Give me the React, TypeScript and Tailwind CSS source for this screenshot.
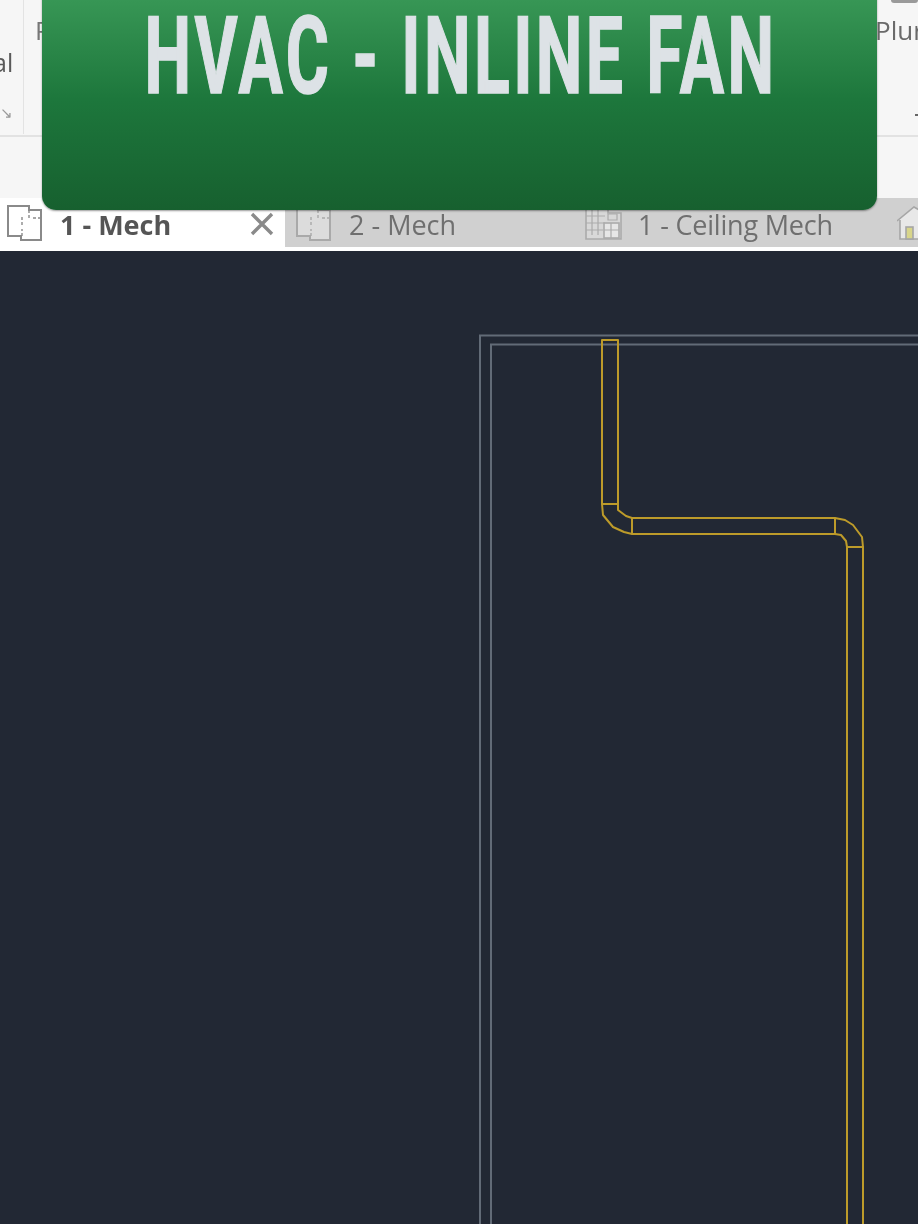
const PlanIcon = ({ muted = false }: { muted?: boolean }) => (
  <svg width="36" height="36" viewBox="0 0 36 36" fill="none" stroke={muted ? "#a9a9a9" : "#8a8a8a"} strokeWidth="2">
    <path d="M1 1H22V5H34V35H14V31H1Z" fill={muted ? "#dcdcdc" : "#ffffff"} />
    <path d="M15 31V24M15 20V12M22 5V13M26 13H34" strokeWidth="1.4" strokeDasharray="3 2" />
  </svg>
);

const CeilingIcon = () => (
  <svg width="38" height="34" viewBox="0 0 38 34" fill="none" stroke="#ababab" strokeWidth="1.6">
    <path d="M1 1H23V7H36V33H1Z" fill="#d8d8d8" />
    <path d="M7 3V29M13 3V29M1 10H20M1 17H20M1 24H18" strokeWidth="1.2" />
    <rect x="19" y="17" width="15" height="15" fill="#e6e6e6" />
    <path d="M26 17V32M19 24H34M23 8H32V14H23Z" strokeWidth="1.2" />
  </svg>
);

const HomeIcon = () => (
  <svg width="24" height="34" viewBox="0 0 24 34" fill="none" stroke="#a6a6a6" strokeWidth="1.6">
    <path d="M0 15L17 1L24 5V33H3V14" fill="#e8e8e8" />
    <rect x="9" y="21" width="7" height="12" fill="#d8d58a" />
  </svg>
);

const Tab = ({ label, icon, gap, textClass = "" }: { label: string; icon: React.ReactNode; gap: string; textClass?: string }) => (
  <div className={`flex items-center ${gap}`}>
    {icon}
    <span className={`pt-[3px] text-[27px] leading-none text-[#6f6f6f] whitespace-nowrap ${textClass}`}>{label}</span>
  </div>
);

const App = () => {
  return (
    <div className="relative flex flex-col w-[918px] h-[1224px] overflow-hidden bg-[#f5f5f5] blur-[0.5px] font-['Open_Sans','Noto_Sans',sans-serif]">
      {/* ribbon */}
      <div className="flex flex-col h-[198px] shrink-0 bg-[#f6f6f6]">
        <div className="relative h-[137px] border-b-2 border-[#e2e2e2] shrink-0">
          <div className="absolute left-[23px] top-0 h-[134px] w-px bg-[#e3e3e3]" />
          <span className="absolute left-[-7px] top-[50px] text-[25px] leading-none text-[#5a5a5a]">al</span>
          <span className="absolute left-[35px] top-[17px] text-[26px] leading-none text-[#777777]">P</span>
          <span className="absolute left-0 top-[105px] text-[15px] leading-none text-[#999999]">↘</span>
          <span className="absolute left-[875px] top-[17px] text-[26px] leading-none text-[#6a6a6a]">Plur</span>
          <div className="absolute left-[891px] top-0 h-[3px] w-[27px] rounded-b bg-[#9a9a9a]" />
          <div className="absolute left-[915px] top-[114px] h-[2px] w-[3px] bg-[#666666]" />
        </div>
      </div>

      {/* view tabs */}
      <div className="flex h-[49px] shrink-0 bg-[#d0d0d0]">
        <div className="flex items-center w-[285px] pl-[7px] pr-[11px] bg-white shrink-0">
          <PlanIcon />
          <span className="ml-[17px] pt-[3px] text-[27px] leading-none font-bold text-[#555555] whitespace-nowrap">1 - Mech</span>
          <svg className="ml-auto mt-[2px]" width="24" height="24" viewBox="0 0 24 24" stroke="#8a8a8a" strokeWidth="3.4">
            <path d="M2 2L22 22M22 2L2 22" />
          </svg>
        </div>
        <div className="flex items-center pl-[11px]">
          <Tab label="2 - Mech" icon={<PlanIcon muted />} gap="gap-[17px]" />
        </div>
        <div className="flex items-center pl-[129px]">
          <Tab label="1 - Ceiling Mech" icon={<CeilingIcon />} gap="gap-[15px]" textClass="tracking-[-0.2px]" />
        </div>
        <div className="flex items-center pl-[64px]">
          <HomeIcon />
        </div>
      </div>
      <div className="h-1 shrink-0 bg-white" />

      {/* drawing area */}
      <div className="flex-1 bg-[#222834]">
        <svg width="918" height="973" viewBox="0 251 918 973" fill="none">
          <g stroke="#626b77" strokeWidth="2">
            <path d="M918 335.5H480V1224" />
            <path d="M918 344.5H491V1224" />
          </g>
          <g stroke="#bd9b2a" strokeWidth="2" strokeLinejoin="round">
            <path d="M602 504V340H618V504Z" />
            <path d="M602 504L603 515L613 527L624 532L632 534" />
            <path d="M618 504V510L626 516L632 518" />
            <path d="M632 518H835V534H632Z" />
            <path d="M835 518L845 520L853 525L862 537L863 547" />
            <path d="M835 534L841 535L846 541L847 547" />
            <path d="M847 1224V547H863V1224" />
          </g>
        </svg>
      </div>

      {/* title banner */}
      <div className="absolute left-[42px] top-[-12px] w-[835px] h-[222px] rounded-b-[14px] bg-gradient-to-b from-[#3a9a58] via-[#1d773c] to-[#17602f] shadow-[0_1px_2px_rgba(0,0,0,0.4)]">
        <div className="flex justify-center pt-[42px] pl-[3px]">
          <span className="font-['Roboto',sans-serif] font-bold text-[66px] leading-[54px] tracking-[3.4px] text-[#dde2e6] [-webkit-text-stroke:0.9px_#dde2e6] whitespace-nowrap scale-y-[1.636]">HVAC - INLINE FAN</span>
        </div>
      </div>
    </div>
  );
};

export default App;
